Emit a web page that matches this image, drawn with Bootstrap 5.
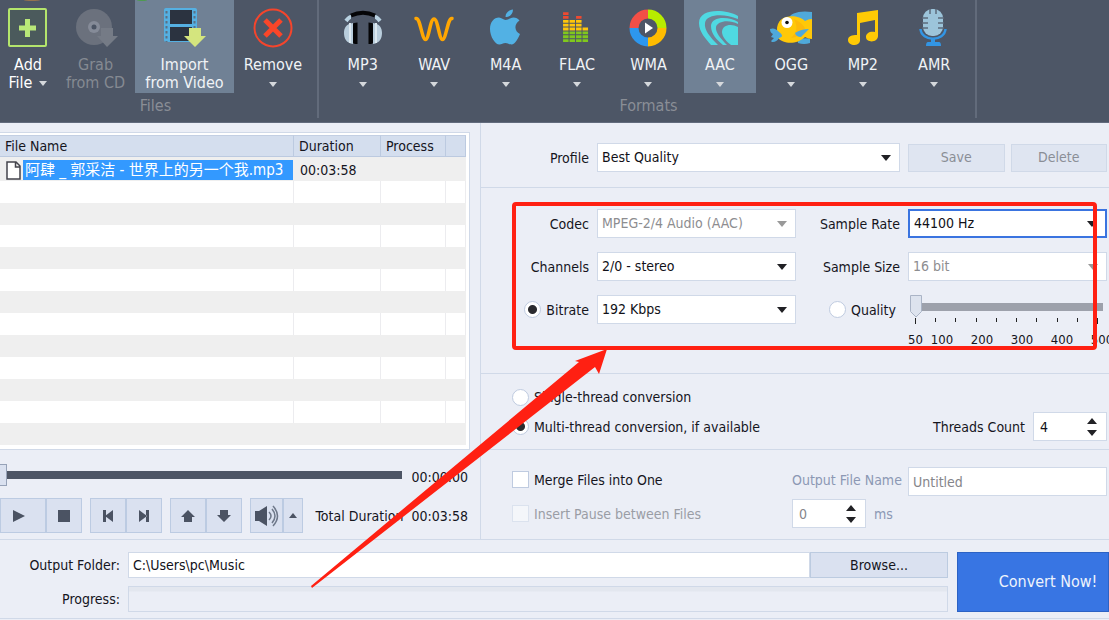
<!DOCTYPE html>
<html lang="en">
<head>
<meta charset="utf-8">
<meta name="viewport" content="width=device-width, initial-scale=1">
<title>Audio Converter</title>
<link href="https://cdn.jsdelivr.net/npm/bootstrap@5.3.0/dist/css/bootstrap.min.css" rel="stylesheet">
<style>
  :root { --line: #d0d9e8; --ink: #15151d; --ribbon: #4d5666; --hot: #708195; --face: #dae1f0; --red: #ff2012; }
  body { background: #ebeef6; color: var(--ink); font: 14px/18px "DejaVu Sans Condensed", "Noto Sans", "Noto Sans CJK SC", sans-serif; overflow-x: hidden; }
  button, input, select { font: inherit; }

  /* ribbon */
  .ribbon { background: var(--ribbon); height: 123px; border-bottom: 1px solid #626b7d; color: #f0f3f6; font-size: 16px; }
  .ribbon-group { border-right: 2px solid #626b7b; height: 118px; }
  .group-files { width: 319px; }
  .group-formats { width: 658px; padding: 0 5px 0 8px; }
  .group-title { color: #8a8e96; line-height: 26px; }
  .group-files .group-title { padding-right: 6px; }
  .tool { --bs-btn-padding-x: 0; --bs-btn-padding-y: 0; --bs-btn-border-width: 0; --bs-btn-border-radius: 0;
          --bs-btn-color: #f0f3f6; --bs-btn-hover-color: #fff; --bs-btn-hover-bg: transparent; --bs-btn-active-bg: var(--hot);
          --bs-btn-disabled-color: #858a92; --bs-btn-disabled-opacity: 1; --bs-btn-active-color: #f0f3f6;
          font-size: 16px; line-height: 18px; height: 93px; }
  .tool svg.glyph { width: 48px; height: 56px; flex: none; }
  .w-add { width: 56px; } .w-grab { width: 79px; } .w-import { width: 99px; } .w-remove { width: 78px; }
  .drop { display: inline-block; border: 4px solid transparent; border-top: 5px solid #d5d8dc; border-bottom: 0; }
  .drop-in { margin-left: 7px; vertical-align: 2px; }

  /* left pane */
  .pane-left { width: 481px; border-right: 1px solid var(--line); }
  .list-frame { background: #fff; border: 1px solid var(--line); border-left: 0; width: 470px; margin-top: 9px; padding: 2px 3px 4px 0; }
  .files { table-layout: fixed; width: 100%; border-collapse: separate; border-spacing: 0; }
  .files th { background: #d4deee; font-weight: 400; height: 22px; line-height: 20px; padding: 0 5px; border-right: 1px solid #bccae0; border-bottom: 1px solid #bccae0; border-top: 1px solid #c3cfe3; }
  .files td { height: 22px; padding: 0; border-right: 1px solid #ececef; line-height: 20px; }
  .files tbody tr:first-child td { height: 24px; padding-top: 2px; }
  .files tbody tr:nth-child(odd) td { background: #efefef; border-color: #efefef; }
  .files td.length { padding-left: 6px; }
  .file-cell { padding-left: 6px; gap: 2px; }
  .file-name { background: #3399ff; color: #fff; font-size: 15px; line-height: 20px; white-space: nowrap; padding-left: 2px; }
  .seek-row { margin-top: 14px; }
  .seek { appearance: none; width: 402px; height: 22px; background: linear-gradient(#4d5565, #4d5565) center / 100% 8px no-repeat; }
  .seek::-webkit-slider-thumb { appearance: none; width: 7px; height: 22px; background: var(--face); border: 1px solid #96a2b8; border-left: 0; }
  .tb { --bs-btn-bg: #dae1f0; --bs-btn-border-color: #bccbe2; --bs-btn-border-radius: 0; --bs-btn-padding-x: 0; --bs-btn-padding-y: 0;
        --bs-btn-hover-bg: #cbd6ea; --bs-btn-hover-border-color: #a9bbd8; width: 36px; height: 35px; line-height: 0; }
  .tb-play { width: 46px; } .tb-vol { width: 33px; } .tb-more { width: 20px; }
  .tb-play svg { margin-right: 8px; }

  /* right pane */
  .sect { border-bottom: 1px solid var(--line); padding-right: 2px; position: relative; }
  .sect-profile { height: 65px; padding-top: 20px; }
  .sect-codec { height: 186px; padding-top: 21px; }
  .sect-thread { height: 76px; padding-top: 14px; }
  .sect-merge { height: 90px; padding-top: 17px; }
  .form-rows { display: grid; grid-template-columns: 108px minmax(0, 1fr) 96px minmax(0, 1fr); column-gap: 8px; row-gap: 14px; align-items: center; }
  .lbl { text-align: right; white-space: nowrap; }
  .span-two { grid-column: span 2; }
  .field { background-color: #fff; border: 1px solid var(--line); border-radius: 0; padding: 0 4px; height: 29px; color: #111118; font-size: 14px; width: 100%; }
  .form-select.field { background-image: url("data:image/svg+xml,%3Csvg xmlns='http://www.w3.org/2000/svg' viewBox='0 0 10 6'%3E%3Cpath fill='%23202024' d='M0 0h10L5 6z'/%3E%3C/svg%3E"); background-size: 10px 6px; background-position: right 8px center; }
  .form-select.field:disabled { background-color: #fff; color: #8d8d90; background-image: url("data:image/svg+xml,%3Csvg xmlns='http://www.w3.org/2000/svg' viewBox='0 0 10 6'%3E%3Cpath fill='%23999' d='M0 0h10L5 6z'/%3E%3C/svg%3E"); }
  .field:disabled { background-color: #fff; color: #85858a; }
  .field.current { border: 2px solid #3a74e0; }
  .flat { --bs-btn-bg: #dae1f0; --bs-btn-color: #15151d; --bs-btn-border-color: #bccbe0; --bs-btn-border-radius: 0; --bs-btn-padding-y: 0;
          --bs-btn-hover-bg: #cbd6ea; --bs-btn-disabled-bg: #dfe5f1; --bs-btn-disabled-border-color: #d0d9e8; --bs-btn-disabled-color: #8a8e96; --bs-btn-disabled-opacity: 1; --bs-btn-font-size: 14px; }
  .save-row { gap: 6px; height: 28px; }
  .opt { display: flex; align-items: center; gap: 5px; }
  .pick { appearance: none; flex: none; width: 17px; height: 17px; margin: 0; background: #fff; border: 1px solid #bfcbe0; }
  .pick[type=radio] { border-radius: 50%; }
  .pick[type=radio]:checked { background: radial-gradient(circle, #2b2b2f 4px, #fff 5px); }
  .pick:disabled { background: #f4f6fa; border-color: #dbe2ee; }
  .quality { appearance: none; display: block; height: 23px; width: 193px; max-width: 100%; background: linear-gradient(#9da1ab, #9da1ab) 0 8px / 100% 8px no-repeat; margin: 0 0 0 2px; }
  .quality::-webkit-slider-thumb { appearance: none; width: 12px; height: 23px; background: url("data:image/svg+xml,%3Csvg xmlns='http://www.w3.org/2000/svg' viewBox='0 0 12 23'%3E%3Cpath fill='%23dde3ee' stroke='%23aab4c6' d='M.5.5h11v16L6 22 .5 16.5z'/%3E%3C/svg%3E"); }
  .quality-box { height: 29px; min-width: 0; }
  .ticks { padding: 0 9px 0 7px; height: 6px; }
  .ticks i { width: 1px; height: 4px; background: #222; }
  .ticks i:first-child, .ticks i:last-child { height: 6px; }
  .scale { margin-right: -15px; line-height: 16px; padding-top: 8px; font-size: 13px; }
  .scale span { flex: 1; text-align: center; }
  .scale span:first-child { flex: none; width: 14px; }
  .frame-mark { position: absolute; left: 31px; right: 12px; top: 14px; height: 148px; border: 4px solid var(--red); border-radius: 4px; pointer-events: none; }
  .muted-blue { color: #8c98b4; }
  .faded { color: #9a9da5; }
  .indent { padding-left: 31px; }
  .spin { position: relative; width: 74px; flex: none; }
  .spin input { appearance: textfield; padding-left: 6px; }
  .spin input::-webkit-inner-spin-button { appearance: none; }
  .spin svg { position: absolute; right: 10px; top: 6px; pointer-events: none; }
  .multi-row { margin-top: 6px; }
  .merge-grid { display: grid; grid-template-columns: minmax(0, 1fr) 108px calc(50% - 114px); column-gap: 8px; row-gap: 3px; align-items: center; }

  /* arrow annotation over both panes */
  .stage { position: relative; }
  .pointer { position: absolute; left: 310px; top: 225px; pointer-events: none; }

  .bottom { border-top: 1px solid var(--line); border-bottom: 1px solid var(--line); padding: 12px 0 6px; margin-top: -1px; }
  .bottom-grid { display: grid; grid-template-columns: 120px minmax(0, 1fr) 138px; row-gap: 8px; line-height: 26px; }
  .bottom-grid .field { height: 26px; margin-left: 8px; width: calc(100% - 8px); }
  .bottom-grid .flat { height: 26px; line-height: 24px; }
  .work { height: 26px; border: 1px solid var(--line); border-radius: 0; background: linear-gradient(#e3e7ef 4px, #ebeef6 5px); margin-left: 8px; grid-column: span 2; }
  .go { --bs-btn-bg: #3875e3; --bs-btn-border-color: #2c62c4; --bs-btn-border-radius: 0; --bs-btn-color: #eef3fc; --bs-btn-hover-bg: #2f69d2; --bs-btn-padding-x: 0;
        font-size: 16px; width: 152px; height: 60px; padding-left: 30px; margin-left: 9px; }
</style>
</head>
<body>
<header class="ribbon d-flex">
  <div class="ribbon-group group-files">
    <div class="d-flex">
      <button class="btn tool w-add d-flex flex-column align-items-center" type="button">
        <svg class="glyph" viewBox="0 0 48 56"><ellipse cx="28" cy="0" rx="8" ry="1" fill="#94714f"/><rect x="5" y="9" width="37" height="37" rx="1" fill="#4b5a5c" stroke="#b4e56c" stroke-width="2"/><path d="M21 19h5v6.500h6v5h-6v6.500h-5v-6.500h-6v-5h6z" fill="#b9e878"/></svg>
        <span>Add</span><span>File<i class="drop drop-in"></i></span>
      </button>
      <button class="btn tool w-grab d-flex flex-column align-items-center" type="button" disabled>
        <svg class="glyph" viewBox="0 0 48 56"><circle cx="22" cy="27" r="18" fill="#6b717d"/><circle cx="22" cy="27" r="6" fill="#858b98"/><circle cx="22" cy="27" r="2.500" fill="#4b5464"/><path d="M29 28h12v8h5L35 47 25 36h4z" fill="#757b86"/></svg>
        <span>Grab</span><span>from CD</span>
      </button>
      <button class="btn tool active w-import d-flex flex-column align-items-center" type="button">
        <svg class="glyph overflow-visible" viewBox="0 0 48 56"><ellipse cx="-19" cy="0" rx="5" ry="1" fill="#4e9a50"/><path d="M3 10q0-2 2-2h29q2 0 2 2v30q0 2-2 2H5q-2 0-2-2z" fill="#55b0e2"/><path d="M9 10h22v14H9zM9 27h22v14H9z" fill="#2b3340"/><path d="M5.500 11v31M33.500 11v31" stroke="#5b7186" stroke-width="2" stroke-dasharray="2.500 2.500"/><path d="M28 28h12v8h5L34 47 23 36h5z" fill="#d4e57e"/></svg>
        <span>Import</span><span>from Video</span>
      </button>
      <button class="btn tool w-remove d-flex flex-column align-items-center" type="button">
        <svg class="glyph" viewBox="0 0 48 56"><circle cx="24" cy="28" r="18.500" fill="none" stroke="#f5452c" stroke-width="2"/><path d="M16 20l16 16M32 20L16 36" stroke="#fa4629" stroke-width="5"/></svg>
        <span>Remove</span><span class="lh-1"><i class="drop"></i></span>
      </button>
    </div>
    <div class="group-title text-center">Files</div>
  </div>
  <div class="ribbon-group group-formats">
    <div class="d-flex">
      <button class="btn tool flex-fill w-100 d-flex flex-column align-items-center" type="button">
        <svg class="glyph" viewBox="0 0 48 56"><path d="M7 21q3-4 5-4M41 21q-3-4-5-4" stroke="#b9d2e2" stroke-width="4" fill="none"/><path d="M12 15.500Q24 10 36 15.500" stroke="#050507" stroke-width="4" fill="none"/><path d="M14 23v21C7 43 5 38 5 33s2-9 9-10zM34 23v21c7-1 9-6 9-11s-2-9-9-10z" fill="#b9cddc"/><path d="M11 23v20M37 23v20" stroke="#dce8f0" stroke-width="2"/><path d="M14 24q0-1.500 4.500-1.500v21.500q-4.500 0-4.500-1.500zM34 24q0-1.500-4.500-1.500v21.500q4.500 0 4.500-1.500z" fill="#050507"/></svg>
        <span>MP3</span><span class="lh-1"><i class="drop"></i></span>
      </button>
      <button class="btn tool flex-fill w-100 d-flex flex-column align-items-center" type="button">
        <svg class="glyph" viewBox="0 0 48 56"><path d="M6 18.500C10 17 12 39.500 15.500 39.500S20 19 24 19s5 20.500 8.500 20.500S38 17 42 18.500" fill="none" stroke="#ffa602" stroke-width="3.500" stroke-linecap="round"/></svg>
        <span>WAV</span><span class="lh-1"><i class="drop"></i></span>
      </button>
      <button class="btn tool flex-fill w-100 d-flex flex-column align-items-center" type="button">
        <svg class="glyph" viewBox="0 0 48 56"><path d="M23.500 20c3 0 5-2.500 8-2.500 2.500 0 4.500 1 6 3-6 4-5 11 .5 13.500-1.500 4-5 10.500-8.500 10.500-2.500 0-3.500-1.500-6-1.500s-4 1.500-6 1.500C13 44.500 8 36.500 8 29c0-7 4-11.500 9-11.500 2.500 0 4.500 2.500 6.500 2.500zM23.500 17c0-4 3-7 7.500-7.500C31 14 28 17 23.500 17z" fill="#52b1e4"/></svg>
        <span>M4A</span><span class="lh-1"><i class="drop"></i></span>
      </button>
      <button class="btn tool flex-fill w-100 d-flex flex-column align-items-center" type="button">
        <svg class="glyph" viewBox="0 0 48 56"><g stroke-width="5.500" stroke-dasharray="2.800 1.050" fill="none"><path d="M12.800 12.200v7M25.800 16v3" stroke="#ee4a31"/><path d="M12.800 19.900v11M19.300 19.900v11M25.800 19.900v11M32.300 27.600v3" stroke="#ffc60a"/><path d="M12.800 31.500v11M19.300 31.500v11M25.800 31.500v11M32.300 31.500v11" stroke="#80c81d"/></g></svg>
        <span>FLAC</span><span class="lh-1"><i class="drop"></i></span>
      </button>
      <button class="btn tool flex-fill w-100 d-flex flex-column align-items-center" type="button">
        <svg class="glyph" viewBox="0 0 48 56"><g fill="none" stroke-width="9"><path d="M10 28a14 14 0 0 1 14-14" stroke="#f34f46"/><path d="M24 14a14 14 0 0 1 14 14" stroke="#b8ec00"/><path d="M38 28a14 14 0 0 1-14 14" stroke="#ffbc00"/><path d="M24 42a14 14 0 0 1-14-14" stroke="#2d97ee"/></g><path d="M21 22.500v11l8-5.500z" fill="#fff"/></svg>
        <span>WMA</span><span class="lh-1"><i class="drop"></i></span>
      </button>
      <button class="btn tool active flex-fill w-100 d-flex flex-column align-items-center" type="button">
        <svg class="glyph" viewBox="0 0 48 56"><g fill="#4fd9e2"><path d="M42 16C29 9 3 8 3 23c0 9 7 16 12 22h7C14 37 8 30 9 23c1-9 19-10 33-4z"/><path d="M42 22c-9-6-27-6-27 4 0 8 6 14 12 19h4C25 39 19 32 20 27c1-6 13-8 22-3z"/><path d="M42 27c-7-4-16-2-16 5 0 5 5 10 9 13h7z"/></g></svg>
        <span>AAC</span><span class="lh-1"><i class="drop"></i></span>
      </button>
      <button class="btn tool flex-fill w-100 d-flex flex-column align-items-center" type="button">
        <svg class="glyph" viewBox="0 0 48 56"><path d="M21 19c2-6 12-9 24-7v16zM31 40q7-3 12-1v4q-6 2-12 0z" fill="#4fa9da"/><path d="M10 31C9 13 31 14 38 21q3-2 7-2v20q-4 0-7-2c-8 8-22 7-27 1z" fill="#ffc808"/><path d="M27 19q7 3 11 9-4 9-14 10 9-8 3-19z" fill="#fdb90b"/><path d="M42 29q-8 0-14 4 1 4 6 4zM3 29q5-2 9 3c4 3 4 5 0 6-2 4-7 5-8 3l3-3-3-1 2-3q-3-1-3-5z" fill="#4fa9da"/><circle cx="20" cy="22.500" r="5.500" fill="#fff"/><circle cx="20" cy="22.500" r="1.800" fill="#111"/></svg>
        <span>OGG</span><span class="lh-1"><i class="drop"></i></span>
      </button>
      <button class="btn tool flex-fill w-100 d-flex flex-column align-items-center" type="button">
        <svg class="glyph" viewBox="0 0 48 56"><path d="M18 13l21-3v26c0 7-12 7-12 1 0-4 4-6 9-5V20l-15 3v18c-1 6-12 5-12-1 0-4 4-5 9-5z" fill="#ffca05"/></svg>
        <span>MP2</span><span class="lh-1"><i class="drop"></i></span>
      </button>
      <button class="btn tool flex-fill w-100 d-flex flex-column align-items-center" type="button">
        <svg class="glyph" viewBox="0 0 48 56"><rect x="13" y="9" width="20" height="27" rx="9" fill="#9cc4da"/><path d="M12 18h6M12 23h6M12 28h6M28 18h6M28 23h6M28 28h6M20 9v5M26 9v5" stroke="#5c6b7c" stroke-width="1.500"/><path d="M10.500 29c1 13 24 13 25 0" fill="none" stroke="#3295e4" stroke-width="2.500"/><path d="M21 38h4v4h4q2 0 2 4H16q0-4 2-4h3z" fill="#3295e4"/></svg>
        <span>AMR</span><span class="lh-1"><i class="drop"></i></span>
      </button>
    </div>
    <div class="group-title text-center">Formats</div>
  </div>
</header>

<main class="stage d-flex">
  <section class="pane-left flex-shrink-0">
    <div class="list-frame">
      <table class="files">
        <colgroup><col style="width:294px"><col style="width:87px"><col style="width:65px"><col></colgroup>
        <thead><tr><th>File Name</th><th>Duration</th><th>Process</th><th></th></tr></thead>
        <tbody>
          <tr><td><div class="file-cell d-flex align-items-center"><svg class="flex-shrink-0" width="15" height="19" viewBox="0 0 15 19"><path d="M1 1h9l4 4v13H1zM9.500 1v5H14" fill="#fff" stroke="#44444c" stroke-width="1.500"/></svg><span class="file-name flex-fill">阿肆 _ 郭采洁 - 世界上的另一个我.mp3</span></div></td><td class="length">00:03:58</td><td></td><td></td></tr>
          <tr><td></td><td></td><td></td><td></td></tr><tr><td></td><td></td><td></td><td></td></tr>
          <tr><td></td><td></td><td></td><td></td></tr><tr><td></td><td></td><td></td><td></td></tr>
          <tr><td></td><td></td><td></td><td></td></tr><tr><td></td><td></td><td></td><td></td></tr>
          <tr><td></td><td></td><td></td><td></td></tr><tr><td></td><td></td><td></td><td></td></tr>
          <tr><td></td><td></td><td></td><td></td></tr><tr><td></td><td></td><td></td><td></td></tr>
          <tr><td></td><td></td><td></td><td></td></tr><tr><td></td><td></td><td></td><td></td></tr>
        </tbody>
      </table>
    </div>
    <div class="seek-row d-flex justify-content-between align-items-end pe-2 me-1">
      <input class="seek" type="range" min="0" max="238" value="0" aria-label="Position"><span>00:00:00</span>
    </div>
    <div class="d-flex align-items-center mt-2 pt-1 pe-2 me-1">
      <div class="d-flex me-2">
        <button class="btn tb tb-play" type="button" aria-label="Play"><svg width="14" height="14" fill="#4b5363"><path d="M1 1l12 6-12 6z"/></svg></button>
        <button class="btn tb" type="button" aria-label="Stop"><svg width="12" height="12" fill="#4b5363"><path d="M0 0h12v12H0z"/></svg></button>
      </div>
      <div class="d-flex me-2">
        <button class="btn tb" type="button" aria-label="Previous"><svg width="12" height="12" fill="#4b5363"><path d="M1 0h3v12H1zM11 0v12L3 6z"/></svg></button>
        <button class="btn tb" type="button" aria-label="Next"><svg width="12" height="12" fill="#4b5363"><path d="M8 0h3v12H8zM1 0v12l8-6z"/></svg></button>
      </div>
      <div class="d-flex me-2">
        <button class="btn tb" type="button" aria-label="Move up"><svg width="14" height="12" fill="#4b5363"><path d="M7 0l7 7h-3v5H3V7H0z"/></svg></button>
        <button class="btn tb" type="button" aria-label="Move down"><svg width="14" height="12" fill="#4b5363"><path d="M7 12l7-7h-3V0H3v5H0z"/></svg></button>
      </div>
      <div class="d-flex me-auto">
        <button class="btn tb tb-vol" type="button" aria-label="Volume"><svg width="25" height="22" viewBox="0 0 25 22"><path d="M1 6h4l8-5v20l-8-5H1z" fill="#4b5363"/><path d="M15 7q4 4 0 8M18 4q6 7 0 14M19 1q9 10 0 20" fill="none" stroke="#6e7889" stroke-width="1.500"/></svg></button>
        <button class="btn tb tb-more" type="button" aria-label="Volume options"><svg width="8" height="5" fill="#4b5363"><path d="M4 0l4 5H0z"/></svg></button>
      </div>
      <span class="me-2">Total Duration</span><span>00:03:58</span>
    </div>
  </section>

  <section class="flex-fill">
    <div class="sect sect-profile">
      <div class="form-rows">
        <label class="lbl" for="profile">Profile</label>
        <div class="span-two"><select class="form-select field" id="profile"><option>Best Quality</option></select></div>
        <div class="save-row d-flex">
          <button class="btn flat w-50" type="button" disabled>Save</button>
          <button class="btn flat w-50" type="button" disabled>Delete</button>
        </div>
      </div>
    </div>
    <div class="sect sect-codec">
      <div class="form-rows">
        <label class="lbl" for="codec">Codec</label>
        <select class="form-select field" id="codec" disabled><option>MPEG-2/4 Audio (AAC)</option></select>
        <label class="lbl" for="rate">Sample Rate</label>
        <select class="form-select field current" id="rate"><option>44100 Hz</option></select>
        <label class="lbl" for="channels">Channels</label>
        <select class="form-select field" id="channels"><option>2/0 - stereo</option></select>
        <label class="lbl" for="size">Sample Size</label>
        <select class="form-select field" id="size" disabled><option>16 bit</option></select>
        <label class="opt justify-content-end"><input class="pick" type="radio" name="mode" checked>Bitrate</label>
        <select class="form-select field" aria-label="Bitrate value"><option>192 Kbps</option></select>
        <label class="opt justify-content-end pe-1"><input class="pick" type="radio" name="mode">Quality</label>
        <div class="quality-box">
          <input class="quality" type="range" min="50" max="500" value="50" aria-label="Quality value">
          <div class="ticks d-flex justify-content-between"><i></i><i></i><i></i><i></i><i></i><i></i><i></i><i></i><i></i><i></i></div>
          <div class="scale d-flex"><span>50</span><span>100</span><span>200</span><span>300</span><span>400</span><span>500</span></div>
        </div>
      </div>
      <div class="frame-mark"></div>
    </div>
    <div class="sect sect-thread indent">
      <label class="opt"><input class="pick" type="radio" name="threads">Single-thread conversion</label>
      <div class="multi-row d-flex align-items-center">
        <label class="opt me-auto"><input class="pick" type="radio" name="threads" checked>Multi-thread conversion, if available</label>
        <label class="me-2" for="count">Threads Count</label>
        <div class="spin"><input class="form-control field" id="count" type="number" value="4"><svg width="10" height="18" fill="#222226"><path d="M5 0l5 6H0zM5 18l5-6H0z"/></svg></div>
      </div>
    </div>
    <div class="sect sect-merge">
      <div class="merge-grid">
        <label class="opt indent pb-1"><input class="pick" type="checkbox">Merge Files into One</label>
        <label class="lbl muted-blue pb-1" for="outname">Output File Name</label>
        <input class="form-control field" id="outname" type="text" value="Untitled" disabled>
        <label class="opt indent faded"><input class="pick" type="checkbox" disabled>Insert Pause between Files</label>
        <div class="span-two d-flex align-items-center gap-2">
          <div class="spin"><input class="form-control field" id="pause" type="number" value="0" disabled><svg width="10" height="18" fill="#222226"><path d="M5 0l5 6H0zM5 18l5-6H0z"/></svg></div>
          <label class="muted-blue" for="pause">ms</label>
        </div>
      </div>
    </div>
  </section>
  <svg class="pointer" width="300" height="240" viewBox="0 0 300 240"><path d="M1 238L269 14l-4-1 32-12-8 25-4-7L2 240z" fill="#ff2012"/></svg>
</main>

<footer class="bottom d-flex align-items-start">
  <div class="bottom-grid flex-fill">
    <label class="lbl" for="folder">Output Folder:</label>
    <input class="form-control field" id="folder" type="text" value="C:\Users\pc\Music">
    <button class="btn flat" type="button">Browse...</button>
    <span class="lbl">Progress:</span>
    <div class="progress work" role="progressbar" aria-label="Progress" aria-valuenow="0"></div>
  </div>
  <button class="btn go flex-shrink-0" type="button">Convert Now!</button>
</footer>
<script src="https://cdn.jsdelivr.net/npm/bootstrap@5.3.0/dist/js/bootstrap.bundle.min.js"></script>
</body>
</html>
